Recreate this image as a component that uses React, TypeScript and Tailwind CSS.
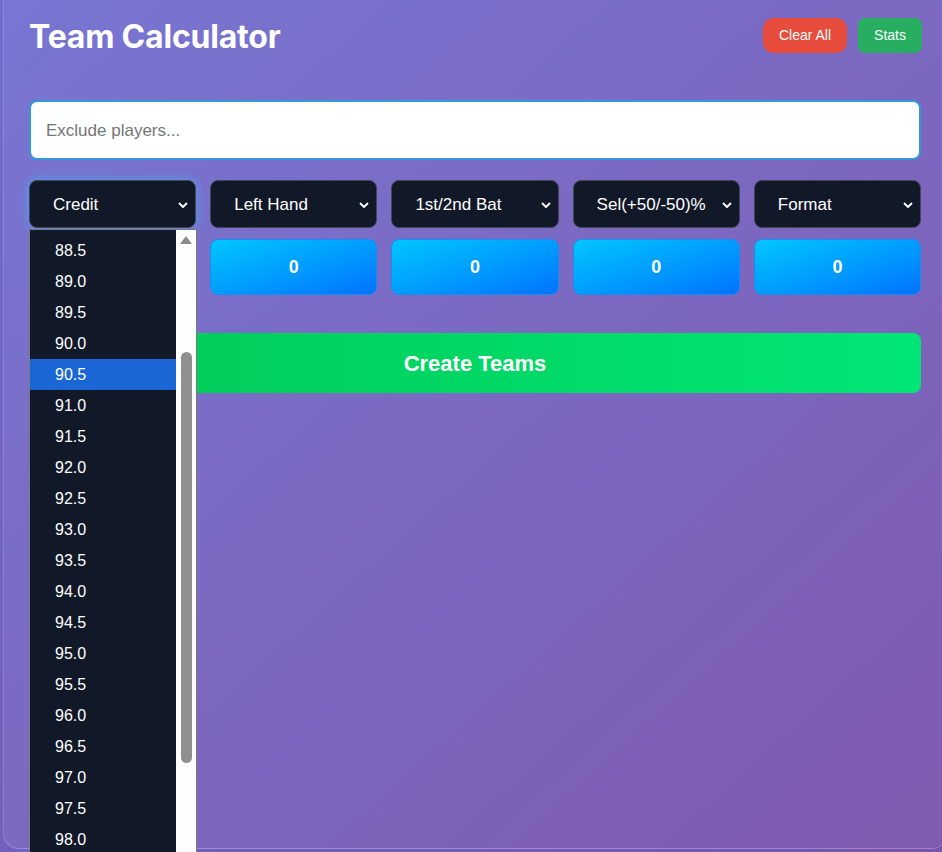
import React from 'react';

const selects = ['Credit', 'Left Hand', '1st/2nd Bat', 'Sel(+50/-50)%', 'Format'];

const creditOptions: string[] = [];
for (let v = 88.5; v <= 98.0; v += 0.5) creditOptions.push(v.toFixed(1));

const Chevron = () => (
    <svg width="12" height="12" viewBox="0 0 12 12" fill="none" stroke="currentColor" strokeWidth="1.8" strokeLinecap="round" strokeLinejoin="round">
        <path d="M2.5 4.5 L6 8 L9.5 4.5" />
    </svg>
);

// 下拉菜单（展开状态）
const CreditMenu = () => (
    <div className="absolute left-0 top-[49px] w-[168px] h-[640px] border border-[#7a7a7a] bg-[#111827] flex overflow-hidden">
        <div className="flex-1 pt-[5px]">
            {creditOptions.map((o) => (
                <div
                    key={o}
                    className={`h-[31px] flex items-center pl-[25px] text-[16px] text-white ${o === '90.5' ? 'bg-[#1a66d5]' : ''}`}
                >
                    {o}
                </div>
            ))}
        </div>
        <div className="w-[20px] bg-[#fdfdfd] flex flex-col items-center">
            <div className="mt-[6px] w-0 h-0 border-l-[6px] border-r-[6px] border-b-[8px] border-l-transparent border-r-transparent border-b-[#8c8c8c]" />
            <div className="mt-[108px] w-[11px] h-[411px] rounded-full bg-[#8f8f8f]" />
        </div>
    </div>
);

export default function App() {
    return (
        <div
            className="w-[942px] h-[852px] overflow-hidden bg-gradient-to-br from-[#6a6fd2] to-[#7a52ab]"
            style={{ fontFamily: "'Liberation Sans', Arial, sans-serif" }}
        >
            <div className="ml-[3px] w-[945px] h-[849px] rounded-b-[16px] border border-t-0 border-white/20 bg-gradient-to-br from-[#7776d2] to-[#7f5ab0] pl-[25px] pr-[26px] pt-[16px]">
                {/* 头部 */}
                <div className="flex items-center justify-between h-[38px]">
                    <h1
                        className="mt-[4px] text-[32px] font-bold text-white tracking-[-0.2px]"
                        style={{ fontFamily: "Inter, 'Noto Sans', sans-serif" }}
                    >
                        Team Calculator
                    </h1>
                    <div className="flex items-center gap-[11px] mt-[1px] mr-[-1px]">
                        <button className="h-[35px] w-[84px] rounded-[11px] bg-[#e74c3c] text-white text-[14px]">Clear All</button>
                        <button className="h-[35px] w-[64px] rounded-[7px] bg-[#27ae60] text-white text-[14px]">Stats</button>
                    </div>
                </div>

                {/* 输入框 */}
                <div className="mt-[46px] h-[60px] rounded-[8px] border-2 border-[#3498db] bg-white flex items-center px-[15px] pt-[2px]">
                    <span className="text-[17px] text-[#757575]">Exclude players...</span>
                </div>

                {/* 筛选行 */}
                <div className="mt-[20px] grid grid-cols-5 gap-[14px]">
                    {selects.map((s, i) => (
                        <div key={s} className="relative">
                            <div
                                className={`h-[48px] rounded-[8px] border border-[#3f4654] bg-[#111827] text-white flex items-center justify-between pl-[23px] pr-[6px] pt-[2px] ${i === 0 ? 'shadow-[0_0_8px_2px_rgba(80,160,240,0.7)]' : ''}`}
                            >
                                <span className="text-[17px] whitespace-nowrap">{s}</span>
                                <Chevron />
                            </div>
                            <div className="mt-[11px] h-[56px] rounded-[8px] border border-[#1a8cf0] bg-gradient-to-br from-[#00c6ff] to-[#0072ff] flex items-center justify-center text-white font-bold text-[18px] pt-[1px]">
                                0
                            </div>
                            {i === 0 && <CreditMenu />}
                        </div>
                    ))}
                </div>

                {/* 创建按钮 */}
                <button className="mt-[38px] w-full h-[60px] rounded-[8px] bg-gradient-to-r from-[#00c853] to-[#00e676] text-white font-bold text-[22px]">
                    Create Teams
                </button>
            </div>
        </div>
    );
}
